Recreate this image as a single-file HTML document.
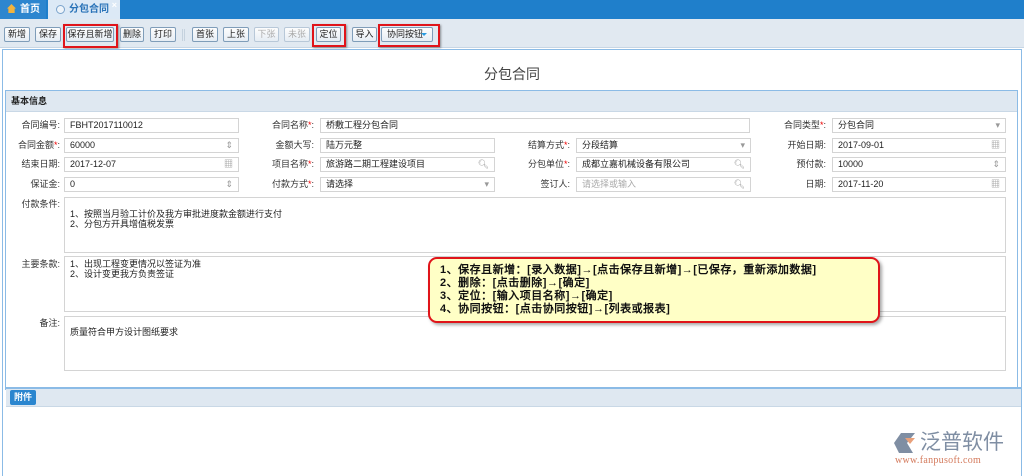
<!DOCTYPE html>
<html><head><meta charset="utf-8"><style>
*{margin:0;padding:0;box-sizing:border-box}
body{width:1024px;height:476px;overflow:hidden;background:#fff;font-family:"Liberation Sans","Noto Sans CJK SC",sans-serif;font-size:9px;color:#333;position:relative}
.a{position:absolute}
.tabbar{left:0;top:0;width:1024px;height:19px;background:#1f7fcb}
.tab1{left:0;top:0;width:46px;height:19px;background:#2d86cf;color:#fff;font-weight:bold;font-size:10px;line-height:19px;padding-left:20px}
.tab2{left:48px;top:0;width:72px;height:19px;background:#dce9f6;color:#2a73b8;font-weight:bold;font-size:10px;line-height:19px;padding-left:21px}
.toolbar{left:0;top:19px;width:1024px;height:29px;background:#e1e9f1;border-bottom:1px solid #c8d6e4}
.btn{position:absolute;top:27px;height:15px;border:1px solid #7f9db9;border-radius:2px;background:linear-gradient(#fdfdfd,#e6edf4);font-size:9px;line-height:13px;text-align:center;color:#222}
.dis{color:#aaa;border-color:#b8c8d8}
.red{position:absolute;border:2px solid #e0141a;box-shadow:1px 1px 2px rgba(0,0,0,.4)}
.page{left:2px;top:49px;width:1020px;height:427px;border:1px solid #8bbbe6;border-bottom:none;background:#fff}
.title{left:0;top:64px;width:1024px;text-align:center;font-size:14px;color:#444}
.panel{left:5px;top:90px;width:1013px;height:300px;border:1px solid #8bbbe6;border-bottom:none}
.sec{left:6px;top:91px;width:1011px;height:21px;background:#dfe8f1;border-bottom:1px solid #c9d8e6;font-weight:bold;line-height:21px;padding-left:5px;color:#222}
.lbl{position:absolute;text-align:right;width:70px;line-height:14px}
.lbl i{color:#e00;font-style:normal}
.in{position:absolute;height:15px;border:1px solid #d4d4d4;background:#fff;line-height:13px;padding-left:5px;color:#222}
.ic{position:absolute;right:5px;top:0;color:#999;font-size:9px}
.ta{position:absolute;left:64px;width:942px;border:1px solid #d4d4d4;background:#fff;padding:4px 5px;line-height:10px;color:#222}
.att{left:6px;top:387px;width:1015px;height:20px;background:#dfe8f1;border-top:2px solid #8bbbe6;border-bottom:1px solid #c9d8e6}
.attb{left:10px;top:390px;width:26px;height:15px;background:#2b86cf;border-radius:2px;color:#fff;font-weight:bold;text-align:center;line-height:15px}
.call{left:428px;top:257px;width:452px;height:66px;background:#ffffc6;border:2px solid #e0141a;border-radius:9px;box-shadow:2px 2px 3px rgba(0,0,0,.35);padding:5px 0 0 10px;font-weight:bold;font-size:11px;line-height:13px;color:#111;letter-spacing:0.5px;font-family:"Liberation Sans","WenQuanYi Zen Hei",sans-serif}
</style></head><body>
<div class="a tabbar"></div>
<div class="a tab1"><span style="position:absolute;left:7px;top:4px;width:9px;height:9px;background:#f3b33d;clip-path:polygon(50% 0,100% 50%,85% 50%,85% 100%,15% 100%,15% 50%,0 50%)"></span>首页</div>
<div class="a tab2"><span style="position:absolute;left:8px;top:5px;width:9px;height:9px;border-radius:50%;border:1px solid #7aa3cc;background:#eef4fa"></span>分包合同<span style="position:absolute;right:3px;top:-4px;color:#fff;font-size:9px">×</span></div>
<div class="a toolbar"></div>
<div class="btn" style="left:4px;width:26px">新增</div>
<div class="btn" style="left:35px;width:26px">保存</div>
<div class="btn" style="left:66px;width:48px">保存且新增</div>
<div class="red" style="left:63px;top:24px;width:55px;height:24px"></div>
<div class="btn" style="left:120px;width:24px">删除</div>
<div class="btn" style="left:150px;width:26px">打印</div>
<div class="a" style="left:182px;top:29px;width:3px;height:12px;border-left:1px solid #c5d2de;border-right:1px solid #c5d2de"></div>
<div class="btn" style="left:192px;width:26px">首张</div>
<div class="btn" style="left:223px;width:26px">上张</div>
<div class="btn dis" style="left:254px;width:25px">下张</div>
<div class="btn dis" style="left:284px;width:26px">未张</div>
<div class="btn" style="left:316px;width:25px">定位</div>
<div class="red" style="left:312px;top:24px;width:34px;height:23px"></div>
<div class="btn" style="left:352px;width:25px">导入</div>
<div class="btn" style="left:381px;width:52px;text-align:left;padding-left:5px">协同按钮<span style="position:absolute;right:5px;top:5px;border:3px solid transparent;border-top:3px solid #2b9be0"></span></div>
<div class="red" style="left:378px;top:24px;width:62px;height:23px"></div>
<div class="a page"></div>
<div class="a title">分包合同</div>
<div class="a panel"></div>
<div class="a sec">基本信息</div>

<div class="lbl" style="left:-10px;top:118px">合同编号:</div>
<div class="in" style="left:64px;top:118px;width:175px">FBHT2017110012</div>
<div class="lbl" style="left:244px;top:118px">合同名称<i>*</i>:</div>
<div class="in" style="left:320px;top:118px;width:430px">桥敷工程分包合同</div>
<div class="lbl" style="left:756px;top:118px">合同类型<i>*</i>:</div>
<div class="in" style="left:832px;top:118px;width:174px">分包合同<span class="ic">▾</span></div>

<div class="lbl" style="left:-10px;top:138px">合同金额<i>*</i>:</div>
<div class="in" style="left:64px;top:138px;width:175px">60000<span class="ic">⇕</span></div>
<div class="lbl" style="left:244px;top:138px">金额大写:</div>
<div class="in" style="left:320px;top:138px;width:175px">陆万元整</div>
<div class="lbl" style="left:500px;top:138px">结算方式<i>*</i>:</div>
<div class="in" style="left:576px;top:138px;width:175px">分段结算<span class="ic">▾</span></div>
<div class="lbl" style="left:756px;top:138px">开始日期:</div>
<div class="in" style="left:832px;top:138px;width:174px">2017-09-01<span class="ic">▦</span></div>

<div class="lbl" style="left:-10px;top:157px">结束日期:</div>
<div class="in" style="left:64px;top:157px;width:175px">2017-12-07<span class="ic">▦</span></div>
<div class="lbl" style="left:244px;top:157px">项目名称<i>*</i>:</div>
<div class="in" style="left:320px;top:157px;width:175px">旅游路二期工程建设项目<span class="ic">🔍︎</span></div>
<div class="lbl" style="left:500px;top:157px">分包单位<i>*</i>:</div>
<div class="in" style="left:576px;top:157px;width:175px">成都立嘉机械设备有限公司<span class="ic">🔍︎</span></div>
<div class="lbl" style="left:756px;top:157px">预付款:</div>
<div class="in" style="left:832px;top:157px;width:174px">10000<span class="ic">⇕</span></div>

<div class="lbl" style="left:-10px;top:177px">保证金:</div>
<div class="in" style="left:64px;top:177px;width:175px">0<span class="ic">⇕</span></div>
<div class="lbl" style="left:244px;top:177px">付款方式<i>*</i>:</div>
<div class="in" style="left:320px;top:177px;width:175px">请选择<span class="ic">▾</span></div>
<div class="lbl" style="left:500px;top:177px">签订人:</div>
<div class="in" style="left:576px;top:177px;width:175px;color:#aaa">请选择或输入<span class="ic">🔍︎</span></div>
<div class="lbl" style="left:756px;top:177px">日期:</div>
<div class="in" style="left:832px;top:177px;width:174px">2017-11-20<span class="ic">▦</span></div>

<div class="lbl" style="left:-10px;top:197px">付款条件:</div>
<div class="ta" style="top:197px;height:56px;padding-top:11px">1、按照当月验工计价及我方审批进度款金额进行支付<br>2、分包方开具增值税发票</div>
<div class="lbl" style="left:-10px;top:257px">主要条款:</div>
<div class="ta" style="top:256px;height:56px;padding-top:2px">1、出现工程变更情况以签证为准<br>2、设计变更我方负责签证</div>
<div class="lbl" style="left:-10px;top:316px">备注:</div>
<div class="ta" style="top:316px;height:55px;padding-top:10px">质量符合甲方设计图纸要求</div>

<div class="a att"></div>
<div class="a attb">附件</div>

<div class="a call">1、保存且新增：[录入数据]→[点击保存且新增]→[已保存，重新添加数据]<br>2、删除：[点击删除]→[确定]<br>3、定位：[输入项目名称]→[确定]<br>4、协同按钮：[点击协同按钮]→[列表或报表]</div>

<svg class="a" style="left:893px;top:432px" width="26" height="22" viewBox="0 0 26 22"><path d="M8 1 L22 1 L14 11 L20 21 L6 21 L1 11 Z" fill="#7f8ea3"/><path d="M12 6 L22 6 L17 12 Z" fill="#e8a07a"/></svg>
<div class="a" style="left:920px;top:428px;font-size:21px;color:#7f8ea3;font-family:'Noto Sans CJK SC',sans-serif;line-height:26px">泛普软件</div>
<div class="a" style="left:895px;top:455px;font-size:10px;color:#d47a5c;font-family:'Liberation Serif',serif;letter-spacing:0.3px">www.fanpusoft.com</div>
</body></html>
